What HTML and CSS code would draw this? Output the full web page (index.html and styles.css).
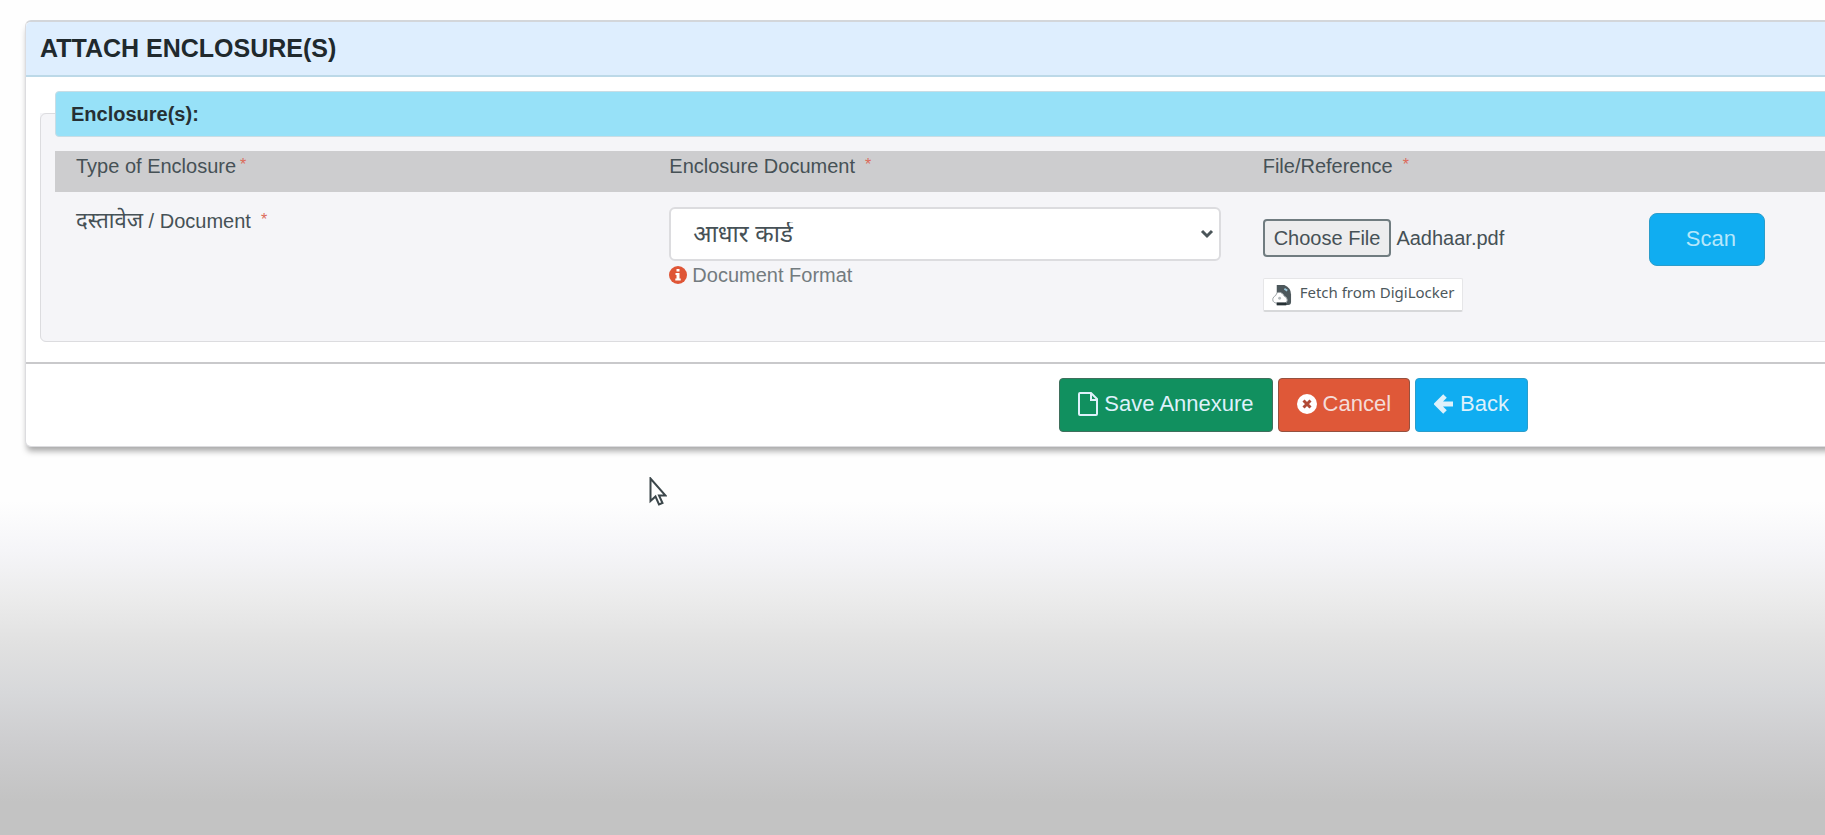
FILE: index.html
```html
<!DOCTYPE html>
<html lang="en">
<head>
<meta charset="utf-8">
<title>Attach Enclosure(s)</title>
<link rel="stylesheet" href="styles.css">
</head>
<body>
<main class="panel">
  <h1 class="panel-title">ATTACH ENCLOSURE(S)</h1>
  <form class="panel-form">
    <div class="panel-body">
      <section class="enclosures" aria-labelledby="enclosures-title">
        <h2 class="enclosures-title" id="enclosures-title">Enclosure(s):</h2>
        <div class="row row-head">
          <div>Type of Enclosure<span class="required required-near">*</span></div>
          <label for="document">Enclosure Document<span class="required">*</span></label>
          <div>File/Reference<span class="required">*</span></div>
        </div>
        <div class="row row-item">
          <div><span class="hindi" lang="hi">दस्तावेज</span> / Document<span class="required">*</span></div>
          <div class="document">
            <div class="select-box">
              <select class="select" id="document" lang="hi">
                <option>आधार कार्ड</option>
              </select>
              <svg class="chevron" viewBox="0 0 14 10" aria-hidden="true"><path d="M2 2l5 5 5-5" fill="none" stroke="#4b5559" stroke-width="3"/></svg>
            </div>
            <a class="format-link" href="#">
              <svg class="info-icon" viewBox="0 0 18 18" aria-hidden="true"><circle cx="9" cy="9" r="9" fill="#df5536"/><path d="M7.500 3h3v2.500h-3zM6.500 7h4v5.500h1.200V14.500H6.300v-2h1.200V9h-1z" fill="#fff"/></svg>
              Document Format
            </a>
          </div>
          <div class="file-cell">
            <div class="file">
              <input class="file-input" type="file" id="file">
              <label class="file-button" for="file">Choose File</label>
              <span>Aadhaar.pdf</span>
            </div>
            <button class="fetch" type="button">
              <svg class="fetch-icon" viewBox="0 0 21 24" aria-hidden="true"><path d="M5 2h8q7 3 7 10v8q0 3-3 3H5V12z" fill="#4d585c"/><path d="M4 21q-4-1-3-5 1-2 3-3 1-4 5-3 3 1 4 4 3 1 3 4 0 3-3 3z" fill="#fff" stroke="#9aa1a4"/><circle cx="8" cy="16" r="1.500" fill="#b4babc"/><path d="M13 6l3 2" stroke="#9cc9dc" stroke-width="2"/><path d="M5 22h10" stroke="#263034" stroke-width="3"/></svg>
              <span class="fetch-text">Fetch from DigiLocker</span>
            </button>
          </div>
          <div class="scan-cell"><button class="scan" type="button">Scan</button></div>
        </div>
      </section>
    </div>
    <footer class="actions">
      <button class="action action-save" type="submit">
        <svg class="icon icon-file" viewBox="0 0 20 24" aria-hidden="true"><path d="M2 1h11l6 6v15q0 1-1 1H2q-1 0-1-1V2q0-1 1-1zM13 1v7h6" fill="none" stroke="currentColor" stroke-width="2"/></svg>
        Save Annexure
      </button>
      <button class="action action-cancel" type="button">
        <svg class="icon" viewBox="0 0 20 20" aria-hidden="true"><circle cx="10" cy="10" r="10" fill="#fff"/><path d="M6.500 6.500l7 7m0-7l-7 7" stroke="#b04a36" stroke-width="3"/></svg>
        Cancel
      </button>
      <button class="action action-back" type="button">
        <svg class="icon" viewBox="0 0 20 20" aria-hidden="true"><path d="M11 2L3 10l8 8M4 10h15" fill="none" stroke="currentColor" stroke-width="5"/></svg>
        Back
      </button>
    </footer>
  </form>
</main>
<svg class="pointer" viewBox="0 0 18 29" aria-hidden="true"><path d="M1.500 1.500v22.500l5-4.500 3.500 8 3.500-1.500-3.500-7.500h6.500z" fill="#fff" stroke="#3c474b" stroke-width="2"/></svg>
</body>
</html>
```
FILE: styles.css
```css
* {
  box-sizing: border-box;
}

body {
  margin: 0;
  min-height: 100vh;
  padding: 20px 0 0 25px;
  overflow-x: hidden;
  background: linear-gradient(#fefefe 60%, #f5f5f8 66%, #ebebeb 72%, #e1e1e1 77%, #d7d8da 83%, #cdcdcf 89%, #c3c3c3 96%) no-repeat;
  color: #465156;
  font-family: "Liberation Sans", "Noto Sans Devanagari", "Noto Sans", sans-serif;
  font-size: 20px;
  line-height: 24px;
}

button,
select {
  font: inherit;
}

/* The panel runs on past the right edge of the window. */
.panel {
  margin-right: -12px;
  border: 1px solid #dcdcdf;
  border-top: 2px solid #d3d6da;
  border-radius: 6px;
  background: #fff;
  box-shadow: 0 6px 6px -2px rgba(0, 0, 0, 0.35);
}

.panel-title {
  margin: 0;
  padding: 10px 14px 11px;
  border-bottom: 2px solid #bcd9e8;
  border-radius: 5px 0 0 0;
  background: #deeefe;
  color: #20292d;
  font-size: 25px;
  line-height: 32px;
}

.panel-body {
  padding: 14px 0 20px 14px;
}

.enclosures {
  position: relative;
  padding: 0 0 30px 15px;
  border-radius: 6px;
  background: linear-gradient(#fff, #fff) 0 0 / 100% 22px no-repeat, #f5f5f8;
}

.enclosures::before {
  content: "";
  position: absolute;
  inset: 22px 0 0 0;
  border: 1px solid #dcdcdf;
  border-radius: 6px;
  pointer-events: none;
}

.enclosures-title {
  position: relative;
  margin: 0 0 14px;
  padding: 9px 15px;
  border: 1px solid #c9dde5;
  border-radius: 4px;
  background: #97e1f8;
  color: #263034;
  font-size: 20px;
  line-height: 26px;
}

.row {
  display: grid;
  grid-template-columns: 593fr 593fr 386fr 187fr;
  padding-left: 21px;
}

.row-head {
  height: 41px;
  padding-top: 3px;
  background: #cdcdcf;
}

.row-item {
  padding-top: 15px;
}

.row-item > :first-child {
  padding-top: 2px;
}

.hindi {
  font-size: 22px;
}

.required {
  margin-left: 10px;
  color: #dc6a5a;
  font-size: 16px;
  line-height: 16px;
  vertical-align: 3px;
}

.required-near {
  margin-left: 4px;
}

.select-box {
  display: grid;
  align-items: center;
  margin-right: 42px;
}

.select,
.chevron {
  grid-area: 1 / 1;
}

.select {
  width: 100%;
  height: 54px;
  padding: 0 22px;
  border: 2px solid #dcdcdf;
  border-radius: 6px;
  background: #fff;
  color: #465156;
  font-size: 24px;
  appearance: none;
}

.chevron {
  justify-self: end;
  width: 14px;
  margin-right: 7px;
  pointer-events: none;
}

.format-link {
  display: flex;
  align-items: center;
  gap: 5px;
  padding-top: 2px;
  color: #737b7f;
  text-decoration: none;
}

.info-icon {
  width: 18px;
}

.file-cell {
  padding-top: 12px;
}

.file {
  position: relative;
  display: flex;
  align-items: center;
  gap: 5px;
}

.file-input {
  position: absolute;
  width: 1px;
  height: 1px;
  opacity: 0;
}

.file-button {
  padding: 5px 9px;
  border: 2px solid #707c80;
  border-radius: 4px;
  background: #ededee;
}

.fetch {
  display: flex;
  align-items: center;
  gap: 8px;
  height: 34px;
  margin-top: 21px;
  padding: 0 8px;
  border: 1px solid #e6e6e8;
  border-bottom: 2px solid #d7d8da;
  border-radius: 2px;
  background: #fff;
  color: #4d585c;
  font-family: "Noto Sans", sans-serif;
  font-size: 15px;
  line-height: 20px;
}

.fetch-icon {
  width: 20px;
}

.fetch-text {
  padding-bottom: 5px;
}

.scan-cell {
  padding-top: 6px;
}

.scan {
  width: 116px;
  height: 53px;
  padding: 0 0 2px 8px;
  border: 1px solid #2b9dcb;
  border-radius: 8px;
  background: #10adf1;
  color: #b5e7fb;
  font-size: 22px;
}

.actions {
  display: flex;
  justify-content: flex-end;
  gap: 5px;
  padding: 14px 308px 14px 0;
  border-top: 2px solid #c9c9cb;
}

.action {
  display: flex;
  align-items: center;
  gap: 6px;
  height: 54px;
  padding: 0 18px 2px;
  border: 1px solid;
  border-radius: 4px;
  color: #def1fb;
  font-size: 22px;
}

.action-save {
  border-color: #3f6f5c;
  background: #11905f;
}

.action-cancel {
  border-color: #95513f;
  background: #df5838;
  color: #f4dcd8;
}

.action-back {
  border-color: #2b9dcb;
  background: #10adf1;
}

.icon {
  width: 20px;
}

.pointer {
  position: absolute;
  left: 649px;
  top: 477px;
  width: 18px;
}
```
